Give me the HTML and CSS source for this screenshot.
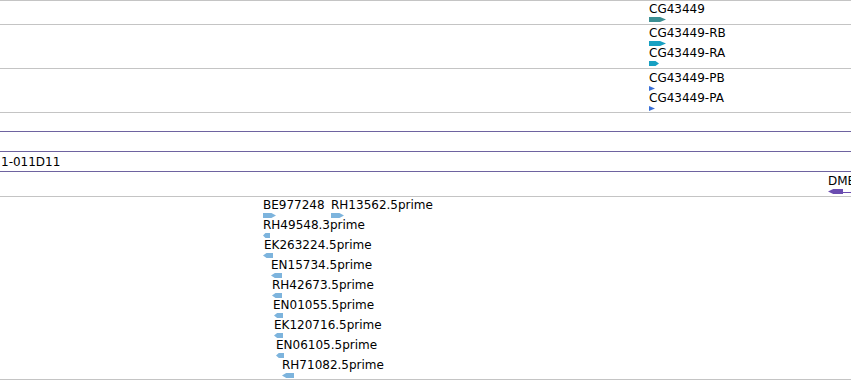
FILE: index.html
```html
<!DOCTYPE html>
<html lang="en">
<head>
    <meta charset="UTF-8">
    <meta name="viewport" content="width=device-width, initial-scale=1.0">
    <title>Genome Tracks</title>
    <link rel="stylesheet" href="styles.css">
</head>
<body>
    <div class="view">

        <!-- Gene track -->
        <div class="track gene-track">
            <div class="feature" style="left: 649px; top: 1px;">
                <span class="label">CG43449</span>
                <div class="glyph arrow-r gene" style="width: 17px;"></div>
            </div>
        </div>

        <!-- Transcripts -->
        <div class="track tx-track">
            <div class="feature" style="left: 649px; top: 1px;">
                <span class="label">CG43449-RB</span>
                <div class="glyph arrow-r transcript" style="width: 17px;"></div>
            </div>
            <div class="feature" style="left: 649px; top: 21px;">
                <span class="label">CG43449-RA</span>
                <div class="glyph arrow-r transcript" style="width: 10px;"></div>
            </div>
        </div>

        <!-- Proteins -->
        <div class="track tx-track">
            <div class="feature" style="left: 649px; top: 2px;">
                <span class="label">CG43449-PB</span>
                <div class="glyph tri-r protein" style="width: 6px;"></div>
            </div>
            <div class="feature" style="left: 649px; top: 22px;">
                <span class="label">CG43449-PA</span>
                <div class="glyph tri-r protein" style="width: 6px;"></div>
            </div>
        </div>

        <div class="spacer"></div>

        <!-- Clone track -->
        <div class="clone-track">
            <div class="clone-row"></div>
            <div class="clone-row">
                <span class="label clone-label">1-011D11</span>
            </div>
            <div class="clone-row tall">
                <div class="feature" style="left: 828px; top: 2px;">
                    <span class="label">DMB</span>
                    <div class="glyph arrow-l clone" style="width: 15px;"></div>
                    <div class="clone-tail"></div>
                </div>
            </div>
        </div>

        <!-- EST track -->
        <div class="track est-track">
            <div class="feature" style="left: 263px; top: 1px;">
                <span class="label">BE977248</span>
                <div class="glyph arrow-r est" style="width: 13px;"></div>
            </div>
            <div class="feature" style="left: 331px; top: 1px;">
                <span class="label">RH13562.5prime</span>
                <div class="glyph arrow-r est" style="width: 13px;"></div>
            </div>
            <div class="feature" style="left: 263px; top: 21px;">
                <span class="label">RH49548.3prime</span>
                <div class="glyph arrow-l est" style="width: 7px;"></div>
            </div>
            <div class="feature" style="left: 264px; top: 41px;">
                <span class="label">EK263224.5prime</span>
                <div class="glyph arrow-l est" style="width: 10px; margin-left: -1px;"></div>
            </div>
            <div class="feature" style="left: 271px; top: 61px;">
                <span class="label">EN15734.5prime</span>
                <div class="glyph arrow-l est" style="width: 11px;"></div>
            </div>
            <div class="feature" style="left: 272px; top: 81px;">
                <span class="label">RH42673.5prime</span>
                <div class="glyph arrow-l est" style="width: 10px;"></div>
            </div>
            <div class="feature" style="left: 273px; top: 101px;">
                <span class="label">EN01055.5prime</span>
                <div class="glyph arrow-l est" style="width: 9px; margin-left: 1px;"></div>
            </div>
            <div class="feature" style="left: 274px; top: 121px;">
                <span class="label">EK120716.5prime</span>
                <div class="glyph arrow-l est" style="width: 9px;"></div>
            </div>
            <div class="feature" style="left: 276px; top: 141px;">
                <span class="label">EN06105.5prime</span>
                <div class="glyph arrow-l est" style="width: 8px;"></div>
            </div>
            <div class="feature" style="left: 282px; top: 161px;">
                <span class="label">RH71082.5prime</span>
                <div class="glyph arrow-l est" style="width: 12px;"></div>
            </div>
        </div>

    </div>
</body>
</html>
```

FILE: styles.css
```css
body {
    margin: 0;
    padding: 0;
    background-color: #ffffff;
    font-family: "DejaVu Sans", sans-serif;
    font-size: 12px;
    color: #000000;
    overflow: hidden;
}

.view {
    width: 851px;
    height: 380px;
    overflow: hidden;
    border-top: 1px solid #c4c4c4;
    box-sizing: border-box;
}

.track {
    position: relative;
    border-bottom: 1px solid #c4c4c4;
}

.gene-track {
    height: 23px;
}

.tx-track {
    height: 43px;
}

.spacer {
    height: 18px;
}

.clone-track {
    border-top: 1px solid #6e63a0;
}

.clone-row {
    position: relative;
    height: 19px;
    border-bottom: 1px solid #6e63a0;
}

.clone-row.tall {
    height: 24px;
    border-bottom: 1px solid #c4c4c4;
}

.est-track {
    height: 182px;
}

.feature {
    position: absolute;
    white-space: nowrap;
}

.label {
    display: block;
    line-height: 14px;
    height: 14px;
}

.clone-label {
    padding-top: 3px;
    margin-left: 1px;
}

.glyph {
    height: 5px;
    margin-top: 1px;
}

.arrow-r {
    clip-path: polygon(0 0, 65% 0, 100% 50%, 65% 100%, 0 100%);
}

.arrow-l {
    clip-path: polygon(35% 0, 100% 0, 100% 100%, 35% 100%, 0 50%);
}

.tri-r {
    clip-path: polygon(0 0, 100% 50%, 0 100%);
}

.gene {
    background-color: #3b8f93;
}

.transcript {
    background-color: #17a0c2;
}

.protein {
    background-color: #3a6fd6;
}

.est {
    background-color: #7db4dd;
}

.clone {
    background-color: #6a4cb0;
    margin-top: 1px;
}

.clone-tail {
    position: absolute;
    left: 15px;
    top: 18px;
    width: 20px;
    height: 1px;
    background-color: #6a4cb0;
}
```
